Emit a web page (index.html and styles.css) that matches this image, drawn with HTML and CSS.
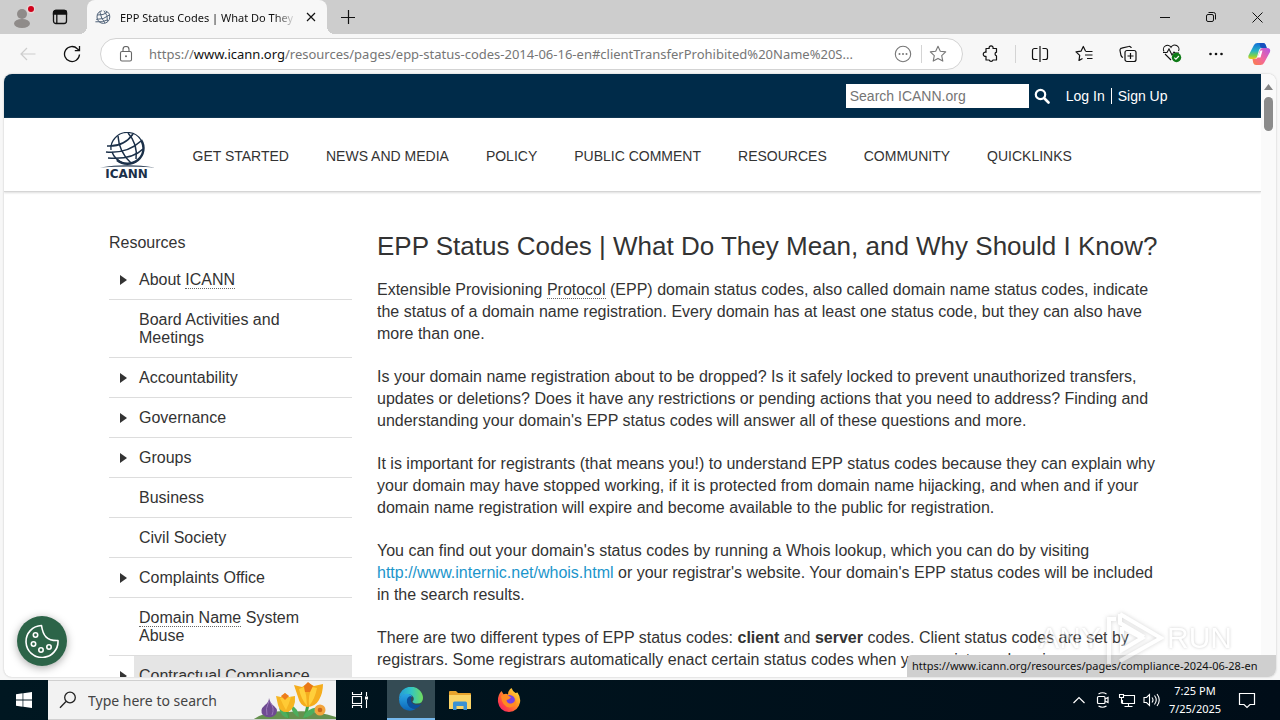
FILE: index.html
```html
<!DOCTYPE html>
<html lang="en">
<head>
<meta charset="utf-8">
<title>EPP Status Codes | What Do They Mean, and Why Should I Know?</title>
<link rel="stylesheet" href="styles.css">
</head>
<body>
<div class="desktop">
  <div class="browser">
    <div class="tabstrip">
      <button class="strip-btn profile" aria-label="Profile">
        <svg width="26" height="26" viewBox="0 0 26 26"><circle cx="13" cy="10" r="5" fill="#8f8b89"/><ellipse cx="13" cy="19.500" rx="8" ry="4.500" fill="#8f8b89"/><circle cx="22" cy="5" r="4.500" fill="#e6d4d4"/><circle cx="22" cy="5" r="3" fill="#d0021b"/></svg>
      </button>
      <button class="strip-btn" aria-label="Tab actions">
        <svg width="16" height="16" viewBox="0 0 16 16" fill="none" stroke="#111" stroke-width="1.300"><rect x="1.500" y="1.500" width="13" height="13" rx="2.500"/><path d="M1.500 4V3.500a2 2 0 0 1 2-2h9a2 2 0 0 1 2 2V5h-13z" fill="#111"/><path d="M4.800 5v9.500"/></svg>
      </button>
      <div class="tab">
        <svg width="16" height="16" viewBox="0 0 40 40" fill="none" stroke="#52647a" stroke-width="2.500"><circle cx="21" cy="20" r="16" stroke-dasharray="70 9"/><path d="M3 26Q22 27 36 15M5 15Q22 16 31 8M12 7Q15 24 25 35M22 4Q33 15 31 31M1 32Q20 34 32 27"/></svg>
        <span class="tab-title">EPP Status Codes | What Do They Mean</span>
        <button class="tab-close" aria-label="Close tab"><svg width="10" height="10" viewBox="0 0 10 10" stroke="#111" stroke-width="1.200"><path d="M1 1l8 8M9 1l-8 8"/></svg></button>
      </div>
      <button class="new-tab" aria-label="New tab"><svg width="14" height="14" viewBox="0 0 14 14" stroke="#111" stroke-width="1.200"><path d="M7.500 0v14M0 7.500h14"/></svg></button>
      <div class="window-controls">
        <button aria-label="Minimize"><svg width="10" height="10" viewBox="0 0 10 10" stroke="#111"><path d="M0 5.500h10"/></svg></button>
        <button aria-label="Restore"><svg width="12" height="12" viewBox="0 0 12 12" fill="none" stroke="#111"><rect x="1.500" y="3.500" width="7" height="7" rx="1.500"/><path d="M3.500 1.500H8.500a2 2 0 0 1 2 2V8.500"/></svg></button>
        <button aria-label="Close"><svg width="11" height="11" viewBox="0 0 11 11" stroke="#111"><path d="M.5.5l10 10M10.500.5l-10 10"/></svg></button>
      </div>
    </div>

    <div class="toolbar">
      <button class="tool" aria-label="Back"><svg width="16" height="14" viewBox="0 0 16 14" fill="none" stroke="#cdcdcd" stroke-width="1.200"><path d="M15.500 7H1M7 1L1 7l6 6"/></svg></button>
      <button class="tool" aria-label="Refresh"><svg width="18" height="18" viewBox="0 0 18 18" fill="none" stroke="#111" stroke-width="1.300"><path d="M16.500 9.500A7.500 7.500 0 1 1 14.300 3.700L16.300 5.500M16.500 1v4.700h-4.700"/></svg></button>
      <div class="address">
        <svg class="lock" width="14" height="16" viewBox="0 0 14 16" fill="none" stroke="#666" stroke-width="1.100"><rect x="1.500" y="5.500" width="11" height="9.500" rx="1.500"/><path d="M4 5.500V3.500a3 3 0 0 1 6 0v2"/><circle cx="7" cy="10.200" r="1" fill="#666" stroke="none"/></svg>
        <div class="url">https://<b>www.icann.org</b>/resources/pages/epp-status-codes-2014-06-16-en#clientTransferProhibited%20Name%20S...</div>
        <button class="in-address" aria-label="More"><svg width="18" height="18" viewBox="0 0 18 18" fill="none" stroke="#777" stroke-width="1.100"><circle cx="9" cy="9" r="7.700"/><g fill="#777" stroke="none"><circle cx="5.500" cy="9" r="1"/><circle cx="9" cy="9" r="1"/><circle cx="12.500" cy="9" r="1"/></g></svg></button>
        <i class="divider"></i>
        <button class="in-address" aria-label="Add to favorites"><svg width="18" height="18" viewBox="0 0 18 18" fill="none" stroke="#777" stroke-width="1.100" stroke-linejoin="round"><path d="M9 1.300l2.300 5 5.400.6-4 3.700 1.100 5.500L9 13.400l-4.800 2.700 1.100-5.500-4-3.700 5.400-.6z"/></svg></button>
      </div>
      <button class="tool" aria-label="Extensions"><svg width="18" height="18" viewBox="0 0 18 18" fill="none" stroke="#111" stroke-width="1.200" stroke-linejoin="round"><path d="M4 3.500h3.200a2 2 0 1 1 3.800 0h3.500v3.700a1.900 1.900 0 0 0 0 3.700V15H11a2 2 0 0 1-3.800 0H4v-3.700a2.100 2.100 0 1 1 0-4z"/></svg></button>
      <i class="divider"></i>
      <button class="tool" aria-label="Split screen"><svg width="18" height="18" viewBox="0 0 18 18" fill="none" stroke="#111" stroke-width="1.200"><path d="M6.500 3.500h-3a2 2 0 0 0-2 2v7a2 2 0 0 0 2 2h3M11.500 3.500h3a2 2 0 0 1 2 2v7a2 2 0 0 1-2 2h-3M9 1v16"/></svg></button>
      <button class="tool" aria-label="Favorites"><svg width="18" height="18" viewBox="0 0 18 18" fill="none" stroke="#111" stroke-width="1.200" stroke-linejoin="round"><path d="M10.500 6L8.300 1.500 6 6.200l-5 .7 3.700 3.500L4 15.500l3.500-2M10.500 6.500h7M10 10h7.500M12 13.500h5.500"/></svg></button>
      <button class="tool" aria-label="Collections"><svg width="18" height="18" viewBox="0 0 18 18" fill="none" stroke="#111" stroke-width="1.200"><rect x="6" y="5.500" width="11" height="11" rx="2"/><path d="M11.500 8v6M8.500 11h6M4 12.500a3 3 0 0 1-2-2L1 5.500a2 2 0 0 1 1.700-2.300l7-1.700A2 2 0 0 1 12.300 3"/></svg></button>
      <button class="tool" aria-label="Browser essentials"><svg width="20" height="20" viewBox="0 0 20 20" fill="none" stroke="#111" stroke-width="1.100"><path d="M9 16L3 10M2 7.500a4 4 0 0 1 7-4.200 4 4 0 0 1 7.500 3.800M1 8.500h4l2-3.500 3 6 2-3 1 1h4"/><circle cx="14.500" cy="13.500" r="4.700" fill="#0f7b17" stroke="none"/><path d="M12.300 13.700l1.600 1.500 3-3.200" stroke="#fff"/></svg></button>
      <button class="tool" aria-label="Settings"><svg width="16" height="4" viewBox="0 0 16 4" fill="#111"><circle cx="2.500" cy="2" r="1.300"/><circle cx="8" cy="2" r="1.300"/><circle cx="13.500" cy="2" r="1.300"/></svg></button>
      <button class="tool" aria-label="Copilot">
        <svg width="24" height="24" viewBox="0 0 24 24">
          <defs>
            <linearGradient id="cpA" x1="0" y1="0" x2="0" y2="1"><stop offset="0" stop-color="#136ed8"/><stop offset=".5" stop-color="#27b4c6"/><stop offset=".8" stop-color="#7ed349"/><stop offset="1" stop-color="#f4c51c"/></linearGradient>
            <linearGradient id="cpB" x1="1" y1="0" x2="0" y2="1"><stop offset="0" stop-color="#b453e5"/><stop offset=".55" stop-color="#f2679b"/><stop offset="1" stop-color="#fb8044"/></linearGradient>
          </defs>
          <path d="M7 3q1-2 3.500-2H16q2 0 2.700 2l1 3h-5q-2 0-2.700 2l-2 7q-.7 2-3 2H4Q.5 17 1.500 13.500z" fill="url(#cpA)"/>
          <path d="M17 21q-1 2-3.500 2H9q-2 0-2.700-2L5.500 17H8q2.300 0 3-2l2-7q.7-2 3-2h4q4 0 3 4z" fill="url(#cpB)"/>
          <path d="M12.500 1H16q2 0 2.700 2l1 3h-4.500q-1.500 0-2.200-2z" fill="#1650bd"/>
          <path d="M13.500 8.500h2l-2 7h-3z" fill="#fff"/>
        </svg>
      </button>
    </div>

    <div class="viewport">
      <div class="page">
        <header>
          <div class="topbar">
            <form class="top-inner">
              <input class="search" type="search" placeholder="Search ICANN.org" aria-label="Search ICANN.org">
              <button class="search-go" type="button" aria-label="Search"><svg width="16" height="16" viewBox="0 0 16 16" fill="none" stroke="#fff"><circle cx="6.500" cy="6.500" r="4.700" stroke-width="2.200"/><path d="M10 10l4.500 4.500" stroke-width="2.600" stroke-linecap="round"/></svg></button>
              <a href="#login">Log In</a><a class="signup" href="#signup">Sign Up</a>
            </form>
          </div>
          <div class="mainnav">
            <div class="nav-inner">
              <a class="logo" href="#home" aria-label="ICANN">
                <svg width="58" height="36" viewBox="0 0 58 36" fill="none" stroke="#1b3049">
                  <path stroke-width="1.200" d="M17 6A16 15.500 0 0 1 43 8"/>
                  <path stroke-width="2.400" d="M43 8A16 15.500 0 0 1 19 28"/>
                  <path stroke-width="1.300" d="M17 6A16 15.500 0 0 0 13 18"/>
                  <path stroke-width="1.600" d="M8 20Q29 22 43 9M9 14Q26 15 35 2M10 26Q34 28 45 17"/>
                  <path stroke-width="1.500" d="M20 4Q21 20 33 31M30 1Q40 12 38 27M14 20Q17 28 25 31"/>
                  <path d="M2 35.500Q29 31 57 35.500Q29 33.500 2 35.500z" fill="#1b3049" stroke="none"/>
                </svg>
                <span>ICANN</span>
              </a>
              <nav>
                <a href="#start">GET STARTED</a>
                <a href="#news">NEWS AND MEDIA</a>
                <a href="#policy">POLICY</a>
                <a href="#comment">PUBLIC COMMENT</a>
                <a href="#resources">RESOURCES</a>
                <a href="#community">COMMUNITY</a>
                <a href="#quicklinks">QUICKLINKS</a>
              </nav>
            </div>
          </div>
        </header>
        <div class="columns">
          <aside>
            <h2>Resources</h2>
            <ul>
              <li><button class="toggle" aria-label="Expand About ICANN"></button><a href="#about">About <abbr>ICANN</abbr></a></li>
              <li><a href="#board">Board Activities and Meetings</a></li>
              <li><button class="toggle" aria-label="Expand Accountability"></button><a href="#acc">Accountability</a></li>
              <li><button class="toggle" aria-label="Expand Governance"></button><a href="#gov">Governance</a></li>
              <li><button class="toggle" aria-label="Expand Groups"></button><a href="#groups">Groups</a></li>
              <li><a href="#business">Business</a></li>
              <li><a href="#civil">Civil Society</a></li>
              <li><button class="toggle" aria-label="Expand Complaints Office"></button><a href="#complaints">Complaints Office</a></li>
              <li><a href="#abuse"><abbr>Domain Name</abbr> System Abuse</a></li>
              <li><button class="toggle" aria-label="Expand Contractual Compliance"></button><a class="hovered" href="#compliance">Contractual Compliance</a></li>
            </ul>
          </aside>
          <main>
            <h1>EPP Status Codes | What Do They Mean, and Why Should I Know?</h1>
            <p>Extensible Provisioning <abbr>Protocol</abbr> (EPP) domain status codes, also called domain name status codes, indicate the status of a domain name registration. Every domain has at least one status code, but they can also have more than one.</p>
            <p>Is your domain name registration about to be dropped? Is it safely locked to prevent unauthorized transfers, updates or deletions? Does it have any restrictions or pending actions that you need to address? Finding and understanding your domain's EPP status codes will answer all of these questions and more.</p>
            <p>It is important for registrants (that means you!) to understand EPP status codes because they can explain why your domain may have stopped working, if it is protected from domain name hijacking, and when and if your domain name registration will expire and become available to the public for registration.</p>
            <p>You can find out your domain's status codes by running a Whois lookup, which you can do by visiting <a href="#whois">http://www.internic.net/whois.html</a> or your registrar's website. Your domain's EPP status codes will be included in the search results.</p>
            <p>There are two different types of EPP status codes: <strong>client</strong> and <strong>server</strong> codes. Client status codes are set by registrars. Some registrars automatically enact certain status codes when you register a domain name.</p>
          </main>
        </div>
      </div>
      <div class="scrollbar">
        <svg width="9" height="6" viewBox="0 0 9 6"><path d="M4.500 0L9 6H0z" fill="#858585"/></svg>
        <i class="thumb"></i>
      </div>
      <button class="cookies" aria-label="Cookie settings"><svg width="34" height="34" viewBox="0 0 34 34" fill="none" stroke="#fff" stroke-width="1.600" stroke-linejoin="round"><path d="M16.500 1.500C18 12 22 17 33 16.500A16 16 0 1 1 16.500 1.500z"/><circle cx="10.500" cy="11" r="2.200"/><circle cx="8.500" cy="20" r="2.200"/><circle cx="16" cy="26" r="2.200"/><circle cx="24" cy="23" r="2.200"/></svg></button>
    </div>
    <div class="status-link">https://www.icann.org/resources/pages/compliance-2024-06-28-en</div>
  </div>

  <div class="taskbar">
    <button class="task" aria-label="Start"><svg width="16" height="16" viewBox="0 0 16 16" fill="#fff"><path d="M0 2.200l6.600-.9v6.300H0zM7.300 1.200L16 0v7.600H7.300zM0 8.400h6.600v6.300L0 13.800zM7.300 8.400H16V16l-8.700-1.200z"/></svg></button>
    <label class="task-search">
      <svg width="18" height="18" viewBox="0 0 18 18" fill="none" stroke="#222" stroke-width="1.300"><circle cx="11" cy="6.500" r="5.300"/><path d="M7 10.500L1 16.800"/></svg>
      <input type="text" placeholder="Type here to search">
      <svg class="flowers" width="82" height="38" viewBox="0 0 82 38">
        <path d="M0 38q16-10 34-7 24-3 48 5v2z" fill="#65914f"/>
        <path d="M34 37q-1-10-4-14M51 37q2-9 4-18" fill="none" stroke="#43a047" stroke-width="3"/>
        <path d="M34 37q-7-1-9-10 9 3 9 10M49 37q10-1 15-11-13 2-15 11M45 36q-1-9-8-12 1 10 8 12" fill="#4cae5e"/>
        <path d="M15 17q1 5 5 8 6 5 0 10-6 3-11-1-4-5 2-10 4-3 4-7z" fill="#6f4b92"/><path d="M15 20q-4 8-2 14M16 21q5 6 2 13" fill="none" stroke="#9a78b8"/>
        <path d="M22 15l5 1 4-4 4 4 6-1q1 12-7 16-8 1-10-7z" fill="#f6b522"/><path d="M26 17q3 7 6 12 3-6 5-13" fill="#ffcb35"/><path d="M27 15l4-3 4 3-4 4z" fill="#ed7c1b"/>
        <path d="M40 4l8 2 6-4 6 3 9-2q0 9-4 16-4 7-12 7-7-1-9-10z" fill="#f5ad1d"/><path d="M45 8q2 10 8 17 0-10-3-19zM63 7q-2 11-8 18-1-11 3-19z" fill="#ffcf3b"/><path d="M50 5l4-4 5 4-3 6h-5z" fill="#e97817"/>
        <circle cx="66" cy="29" r="5.500" fill="#f3a53d"/><circle cx="66" cy="29" r="2.300" fill="#c9671a"/>
      </svg>
    </label>
    <button class="task" aria-label="Task view"><svg width="18" height="16" viewBox="0 0 18 16" fill="none" stroke="#fff" stroke-width="1.100"><rect x="1.500" y="4.500" width="9" height="7"/><path d="M1.500 0v2.500h9V0M1.500 16v-2.500h9V16M15.500 0v4M15.500 8v8"/><path d="M14 4.500h3v3h-3z" fill="#fff" stroke="none"/></svg></button>
    <button class="task active" aria-label="Microsoft Edge">
      <svg width="24" height="24" viewBox="0 0 24 24">
        <defs>
          <linearGradient id="edA" x1="0" y1="0" x2="1" y2="0"><stop offset="0" stop-color="#2499d8"/><stop offset=".5" stop-color="#32c5c5"/><stop offset="1" stop-color="#70dd5c"/></linearGradient>
          <linearGradient id="edB" x1="0" y1="0" x2="0" y2="1"><stop offset="0" stop-color="#2aa7e5"/><stop offset="1" stop-color="#0c65b8"/></linearGradient>
        </defs>
        <path d="M0 11.500A12 11.500 0 0 1 24 11q0 5.500-6 5.500-4 0-4.500-2 1.800-1.500 1-4Q13 7 8.500 7 3 7 0 12z" fill="url(#edA)"/>
        <path d="M0 12Q3 6.500 8.500 6.800q3.500.2 5 2.700Q8 10 8.500 15q1 6 8 7-4 2.500-8.500 1.300Q0 21 0 12z" fill="url(#edB)"/>
        <path d="M12.500 9Q7 9.500 8 15.500q1.500 6 8 6.500 4-1.500 6.500-5-6 2.500-9.500-1-2-2-.5-7z" fill="#0b4f9c"/>
      </svg>
    </button>
    <button class="task" aria-label="File Explorer"><svg width="22" height="19" viewBox="0 0 22 19"><path d="M0 1q0-1 1-1h6l2 2h12q1 0 1 1v14H0z" fill="#e8a32c"/><path d="M0 4h22v14H0z" fill="#fbd467"/><path d="M4 19v-7q0-1.500 1.500-1.500h11Q18 10.500 18 12v7h-3.500v-4h-7v4z" fill="#3c91d2"/></svg></button>
    <button class="task" aria-label="Firefox">
      <svg width="24" height="24" viewBox="0 0 24 24">
        <defs><linearGradient id="ffA" x1="1" y1="0" x2="0" y2="1"><stop offset="0" stop-color="#fff048"/><stop offset=".4" stop-color="#ff9a24"/><stop offset=".75" stop-color="#ff4047"/><stop offset="1" stop-color="#e31587"/></linearGradient></defs>
        <path d="M4.500 3l2 3.300q3-1 4.500.2Q11 2.500 14.500 0q1 3 4 5l2-.5q3.500 5 2.500 10-2 9-11 9.500Q2.500 23.500 1 14 .500 7 4.500 3z" fill="url(#ffA)"/>
        <circle cx="12.500" cy="12.500" r="5.500" fill="#7542e5"/>
        <path d="M4 8q4-3 8 0l2 1.500q-2 2-4.500 2.500.5 4 5 3.500 4-1 3.500-5Q21 18 13 19.500 5 19 4 8z" fill="#ff8a22"/>
      </svg>
    </button>
    <div class="tray">
      <button aria-label="Show hidden icons"><svg width="12" height="8" viewBox="0 0 12 8" fill="none" stroke="#fff" stroke-width="1.200"><path d="M.5 7L6 1.500 11.500 7"/></svg></button>
      <button aria-label="Meet now"><svg width="14" height="16" viewBox="0 0 14 16" fill="none" stroke="#fff" stroke-width="1.200"><rect x="1.500" y="4.500" width="7.500" height="7" rx="1"/><path d="M9 7l3-1.500v5L9 9M2.500 2Q6.500-.5 10.500 2M2.500 14q4 2.500 8 0"/></svg></button>
      <button aria-label="Network"><svg width="18" height="15" viewBox="0 0 18 15" fill="none" stroke="#fff" stroke-width="1.100"><path d="M6 2.500h10.500v8H4.500V7M10.500 10.500v3M6.500 13.500h8"/><path d="M1.500 1.500h4v3h-4zM3.500 4.500v6"/></svg></button>
      <button aria-label="Volume"><svg width="17" height="14" viewBox="0 0 17 14" fill="none" stroke="#fff" stroke-width="1.100"><path d="M1 4.500h2.500l3-3v11l-3-3H1zM9 4.500q2 2.500 0 5M11.500 2.500q3.500 4.500 0 9M14 1q4.500 6 0 12"/></svg></button>
      <div class="clock"><span>7:25 PM</span><span>7/25/2025</span></div>
      <button class="notify" aria-label="Notifications"><svg width="18" height="17" viewBox="0 0 18 17" fill="none" stroke="#fff" stroke-width="1.200"><path d="M1.500 1.500h15v11H12l-3 3-3-3H1.500z"/></svg></button>
    </div>
  </div>

  <div class="watermark">
    <span>ANY</span>
    <svg width="60" height="56" viewBox="0 0 60 56" fill="none" stroke="#fff" stroke-width="4"><path d="M16 4L57 28 16 51M18 17v23l20-12-20-11M16 4v9l24 14M5 55V9h7"/></svg>
    <span>RUN</span>
  </div>
</div>
</body>
</html>
```
FILE: styles.css
```css
* { box-sizing: border-box; }
body { margin: 0; font-family: "Liberation Sans", Arial, sans-serif; color: #333; }
button { border: 0; background: none; padding: 0; display: flex; align-items: center; justify-content: center; flex: none; }
svg { display: block; flex: none; }
a { color: inherit; text-decoration: none; }

.desktop { height: 100vh; display: flex; flex-direction: column; position: relative; overflow: hidden; }
.browser { flex: 1; min-height: 0; display: flex; flex-direction: column; position: relative; background: #f7f7f7; }

/* Tab strip */
.tabstrip { display: flex; height: 34px; background: #cdcdcd; padding-left: 3px; flex: none; }
.strip-btn { width: 38px; }
.tab { display: flex; align-items: center; width: 240px; margin-left: 8px; padding: 0 10px 0 8px; background: #f7f7f7; border-radius: 8px 8px 0 0; position: relative; }
.tab::before, .tab::after { content: ""; position: absolute; bottom: 0; width: 8px; height: 8px; }
.tab::before { left: -8px; background: radial-gradient(circle at 0 0, #cdcdcd 8px, #f7f7f7 8px); }
.tab::after { right: -8px; background: radial-gradient(circle at 100% 0, #cdcdcd 8px, #f7f7f7 8px); }
.tab-title { flex: 1; margin-left: 9px; overflow: hidden; white-space: nowrap; font: 11px "Noto Sans", sans-serif; color: #111; mask-image: linear-gradient(90deg, #000 88%, transparent); }
.tab-close { width: 12px; margin-left: 9px; }
.new-tab { width: 42px; }
.window-controls { display: flex; margin-left: auto; }
.window-controls button { width: 46px; }

/* Toolbar */
.toolbar { display: flex; align-items: center; height: 40px; padding-left: 6px; flex: none; }
.tool { width: 44px; height: 32px; }
.tool:last-child { width: 42px; }
.address { flex: 1; min-width: 0; display: flex; align-items: center; height: 32px; margin: 0 6px; padding: 0 10px 0 18px; background: #fff; border: 1px solid #d3d3d3; border-radius: 16px; }
.url { flex: 1; min-width: 0; margin-left: 16px; overflow: hidden; white-space: nowrap; font: 13px "Noto Sans", sans-serif; color: #767676; }
.url b { font-weight: 400; color: #111; }
.in-address { width: 32px; height: 28px; }
.in-address:last-child { width: 28px; }
.divider { width: 1px; height: 18px; margin: 0 2px; background: #d4d4d4; }

/* Viewport */
.viewport { flex: 1; min-height: 0; display: flex; margin: 0 4px 3px; background: #fff; border-radius: 8px; overflow: hidden; position: relative; box-shadow: 0 0 2px #bbb; }
.page { flex: 1; min-width: 0; overflow: hidden; }
.scrollbar { width: 15px; background: #fafafa; display: flex; flex-direction: column; align-items: center; gap: 7px; padding-top: 10px; }
.thumb { width: 9px; height: 34px; border-radius: 5px; background: #8b8b8b; }

.topbar { background: #002b49; }
.top-inner { display: flex; align-items: center; justify-content: flex-end; max-width: 1070px; height: 44px; margin: 0 auto; color: #fff; font-size: 14px; }
.search { width: 183px; height: 24px; padding: 0 4px; border: 0; border-radius: 0; background: #fff; font: 14px "Liberation Sans", Arial, sans-serif; }
.search::placeholder { color: #757575; }
.search-go { width: 16px; margin: 0 16px 0 5px; }
.signup { margin-left: 6px; padding-left: 6px; border-left: 1px solid #fff; }

.mainnav { border-bottom: 1px solid #d5d5d5; box-shadow: 0 1px 2px #ddd; }
.nav-inner { display: flex; align-items: center; max-width: 1064px; height: 73px; margin: 0 auto; padding-top: 3px; }
.logo { display: flex; flex-direction: column; align-items: center; width: 52px; margin-right: 40px; font: bold 12px/12px "DejaVu Sans", sans-serif; color: #1b3049; }
nav { display: flex; gap: 37px; font-size: 14px; }

.columns { display: flex; gap: 25px; max-width: 1055px; margin: 0 auto; padding: 41px 0 0 4px; }
aside { width: 243px; flex: none; }
h2 { margin: 0 0 8px; font-size: 16px; line-height: 19px; font-weight: 400; }
ul { margin: 0; padding: 0; list-style: none; }
li { display: flex; justify-content: flex-end; border-bottom: 1px solid #ddd; }
li a { width: 218px; padding: 11px 20px 10px 5px; line-height: 18px; }
li:last-child { border-bottom: 0; }
.hovered { background: #e5e5e5; }
.toggle { flex: 1; justify-content: flex-start; padding-left: 11px; }
.toggle::before { content: ""; border: solid transparent; border-width: 5px 0 5px 7px; border-left-color: #333; }
abbr { border-bottom: 1px dotted #666; }
main { flex: 1; min-width: 0; font-size: 16px; line-height: 22px; }
h1 { margin: 0 0 20px; font-size: 26px; line-height: 26px; font-weight: 400; }
p { margin: 0 0 21px; }
p a { color: #1b95cb; }

.cookies { position: absolute; left: 13px; bottom: 11px; width: 50px; height: 50px; border-radius: 50%; background: #2c6448; box-shadow: 0 2px 8px #aaa; }
.status-link { position: absolute; right: 4px; bottom: 3px; min-width: 369px; padding: 0 7px 0 5px; border-radius: 5px 0 8px 0; background: #cfcfcf; color: #111; font: 11px/22px "Noto Sans", sans-serif; }

/* Taskbar */
.taskbar { display: flex; height: 40px; flex: none; background: linear-gradient(90deg, #001721, #000d18); }
.task { width: 48px; }
.task + .task { margin-left: 1px; }
.task + .active { margin-left: 3px; background: #344b54; border-bottom: 2px solid #76b9ed; }
.task-search { display: flex; align-items: center; width: 288px; padding-left: 11px; background: #f2f2f2; border: 1px solid #d0d0d0; border-width: 1px 0; }
.task-search input { flex: 1; min-width: 0; margin-left: 11px; padding: 0; border: 0; background: none; font: 14px "Noto Sans", sans-serif; }
.task-search input::placeholder { color: #444; opacity: 1; }
.tray { display: flex; margin-left: auto; padding-right: 13px; color: #fff; }
.tray button { width: 24px; }
.clock { display: flex; flex-direction: column; justify-content: center; align-items: center; width: 64px; font: 11px/18px "Noto Sans", sans-serif; }
.tray .notify { width: 40px; }

.watermark { position: absolute; right: 48px; bottom: 54px; display: flex; align-items: center; gap: 3px; color: #fff; font: 30px/56px "Liberation Sans", sans-serif; opacity: .5; text-shadow: 0 0 3px #999; pointer-events: none; }
.watermark svg { filter: drop-shadow(0 0 2px #aaa); }
```
